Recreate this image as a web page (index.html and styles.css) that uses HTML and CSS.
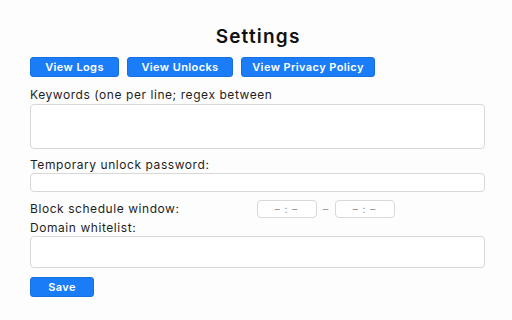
FILE: index.html
```html
<!DOCTYPE html>
<html>
<head>
<meta charset="utf-8">
<link rel="stylesheet" href="styles.css">
</head>
<body>
<main class="page">
  <h1 class="title">Settings</h1>
  <div class="actions">
    <button class="btn">View Logs</button>
    <button class="btn">View Unlocks</button>
    <button class="btn">View Privacy Policy</button>
  </div>
  <label class="label l1">Keywords (one per line; regex between</label>
  <div class="field area-lg"></div>
  <label class="label l2">Temporary unlock password:</label>
  <div class="field input"></div>
  <div class="schedule">
    <span class="label sched-label">Block schedule window:</span>
    <div class="times">
      <span class="time">– : –</span>
      <span class="sep">–</span>
      <span class="time">– : –</span>
    </div>
  </div>
  <label class="label l4">Domain whitelist:</label>
  <div class="field area-sm"></div>
  <div class="save-row"><button class="btn save">Save</button></div>
</main>
</body>
</html>
```

FILE: styles.css
```css
html, body {
  margin: 0;
  padding: 0;
  background: #fdfdfd;
}
body {
  font-family: Inter, "Liberation Sans", Arial, sans-serif;
  color: #1e1e1e;
}
.page {
  display: flex;
  flex-direction: column;
  padding: 25px 27px 0 30px;
  width: 455px;
}
.title {
  margin: 0;
  font-size: 19px;
  line-height: 24px;
  font-weight: 600;
  text-align: center;
  letter-spacing: 1.2px;
  text-indent: 1.2px;
  color: #111;
}
.actions {
  display: flex;
  gap: 8px;
  margin-top: 8px;
}
.btn {
  background: #1a7cf6;
  color: #fff;
  border: 1px solid #1670e0;
  border-radius: 3px;
  height: 20px;
  padding: 0;
  font-family: Inter, "Liberation Sans", Arial, sans-serif;
  font-size: 11px;
  font-weight: 600;
  letter-spacing: 0.4px;
  display: flex;
  align-items: center;
  justify-content: center;
}
.actions .btn:nth-child(1) { width: 89px; }
.actions .btn:nth-child(2) { width: 106px; }
.actions .btn:nth-child(3) { width: 134px; }
.label {
  font-size: 12px;
  line-height: 14px;
  letter-spacing: 0.56px;
  color: #1e1e1e;
}
.l1 { margin-top: 11px; }
.l2 { margin-top: 9px; }
.l4 { margin-top: 3px; }
.field {
  border: 1px solid #d8d8d8;
  border-radius: 4px;
  background: #fff;
  box-sizing: border-box;
}
.area-lg { height: 45px; margin-top: 2px; }
.input { height: 19px; margin-top: 1px; }
.area-sm { height: 32px; margin-top: 1px; }
.schedule {
  display: flex;
  align-items: center;
  margin-top: 8px;
  height: 18px;
}
.sched-label {
  width: 50%;
  flex: none;
}
.times {
  display: flex;
  align-items: center;
  margin-left: -1px;
}
.time {
  width: 60px;
  height: 18px;
  box-sizing: border-box;
  border: 1px solid #d8d8d8;
  border-radius: 4px;
  background: #fff;
  color: #8a8a8a;
  font-size: 10px;
  display: flex;
  align-items: center;
  justify-content: center;
  letter-spacing: 1px;
}
.sep {
  width: 18px;
  text-align: center;
  color: #999;
  font-size: 11px;
}
.save-row {
  display: flex;
  margin-top: 9px;
}
.save { width: 64px; }
```
